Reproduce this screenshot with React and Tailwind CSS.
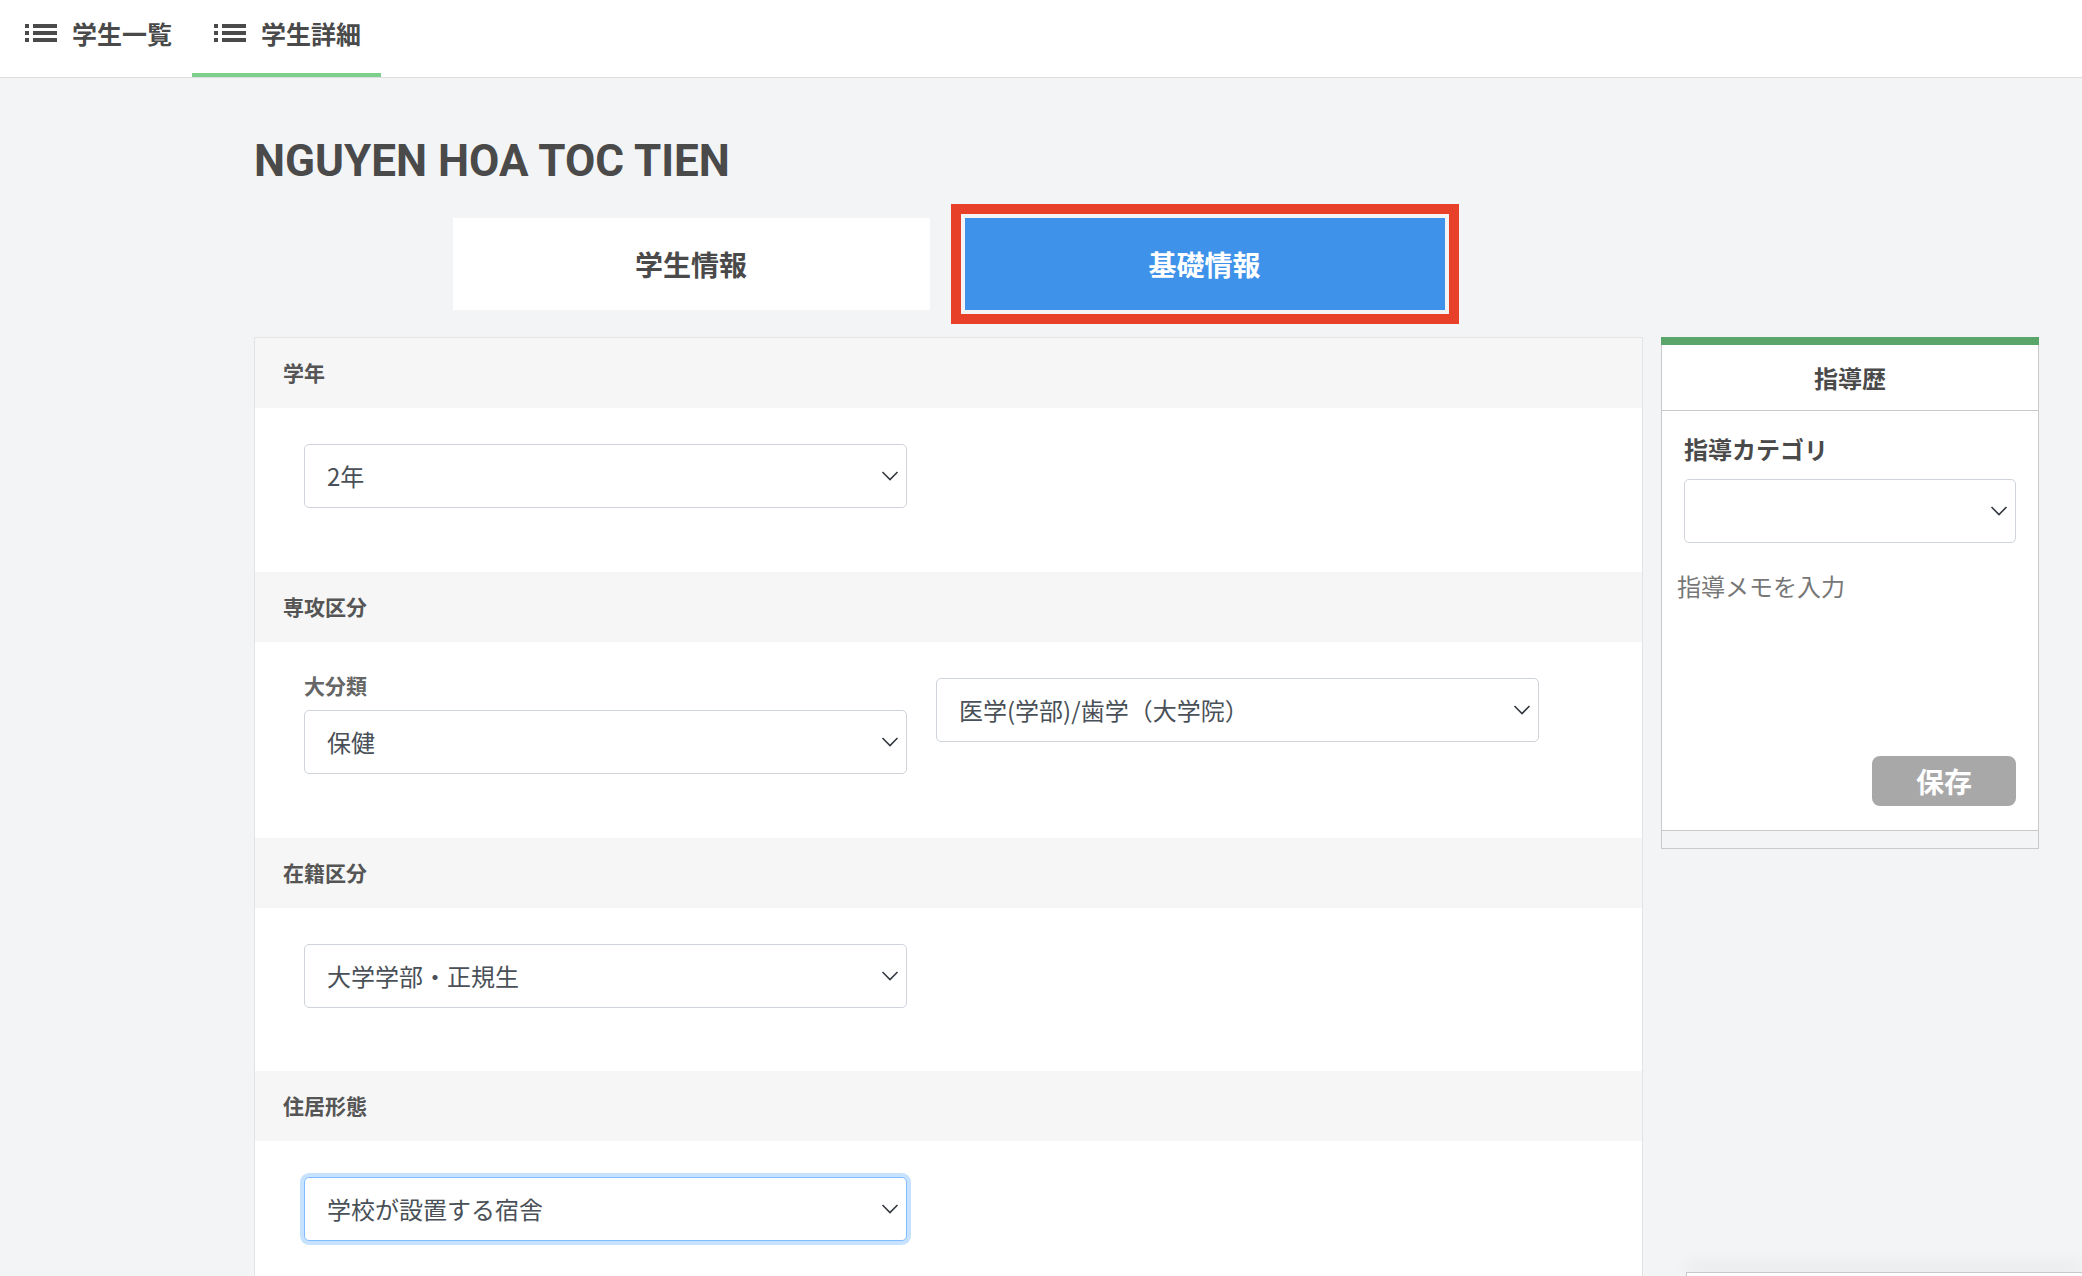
import React from "react";

const JP = { fontFamily: '"Noto Sans CJK JP", "Noto Sans", sans-serif' };

function ListIcon() {
  return (
    <svg width="32" height="18" viewBox="0 0 32 18" fill="#4a4a4a">
      <rect x="0" y="0" width="4" height="4" />
      <rect x="0" y="7" width="4" height="4" />
      <rect x="0" y="14" width="4" height="4" />
      <rect x="8" y="0" width="24" height="4" />
      <rect x="8" y="7" width="24" height="4" />
      <rect x="8" y="14" width="24" height="4" />
    </svg>
  );
}

function Chevron() {
  return (
    <svg
      className="pointer-events-none absolute right-[8px] top-1/2 -translate-y-1/2"
      width="18"
      height="11"
      viewBox="0 0 18 11"
      fill="none"
      stroke="#343a40"
      strokeWidth="1.6"
    >
      <path d="M1.5 1.5 L9 9 L16.5 1.5" />
    </svg>
  );
}

function Select({ value, focus, className = "" }) {
  return (
    <div className={`relative h-[64px] ${className}`}>
      <div
        className={`h-full w-full rounded-[5px] border bg-white pl-[22px] flex items-center text-[24px] text-[#495057] ${
          focus
            ? "border-[#80bdff] shadow-[0_0_0_4px_rgba(0,123,255,0.22)]"
            : "border-[#ced4da]"
        }`}
      >
        {value}
      </div>
      <Chevron />
    </div>
  );
}

function SectionHeader({ children }) {
  return (
    <div className="h-[70px] bg-[#f6f6f6] flex items-center px-[28px] text-[21px] font-bold text-[#555]">
      {children}
    </div>
  );
}

export default function App() {
  return (
    <div className="min-h-screen bg-[#f3f4f6]" style={JP}>
      {/* ─── Top nav ─── */}
      <div className="h-[78px] bg-white border-b border-[#dddddd] flex">
        <div className="relative pl-[25px] pr-[20px] pt-[17px]">
          <div className="flex items-center gap-[15px] h-[32px]">
            <ListIcon />
            <span className="text-[25px] font-bold text-[#4a4a4a] leading-[32px]">学生一覧</span>
          </div>
        </div>
        <div className="relative pl-[22px] pr-[20px] pt-[17px]">
          <div className="flex items-center gap-[15px] h-[32px]">
            <ListIcon />
            <span className="text-[25px] font-bold text-[#4a4a4a] leading-[32px]">学生詳細</span>
          </div>
          <div className="absolute left-0 right-0 bottom-0 h-[4px] bg-[#7dcf8c]" />
        </div>
      </div>

      <div className="pl-[254px]">
        {/* ─── Title & tabs ─── */}
        <div className="w-[1389px]">
          <h1
            className="mt-[61px] text-[44px] leading-[44px] font-bold text-[#4a4a4a]"
            style={{ fontFamily: 'Roboto, "Noto Sans CJK JP", sans-serif' }}
          >
            NGUYEN HOA TOC TIEN
          </h1>
          <div className="mt-[35px] flex justify-center gap-[35px]">
            <div className="w-[477px] h-[92px] bg-white flex items-center justify-center text-[28px] font-bold text-[#4a4a4a]">
              学生情報
            </div>
            <div className="w-[480px] h-[92px] bg-[#3e92ea] flex items-center justify-center text-[28px] font-bold text-white outline-[10px] outline-solid outline-[#e8412a] outline-offset-[4px]">
              基礎情報
            </div>
          </div>
        </div>

        {/* ─── Panels ─── */}
        <div className="mt-[27px] flex gap-[18px] items-start">
          <div className="w-[1389px] border border-[#e3e3e3] bg-white">
            <SectionHeader>学年</SectionHeader>
            <div className="pt-[36px] pb-[64px] pl-[49px]">
              <Select value="2年" className="w-[603px]" />
            </div>

            <SectionHeader>専攻区分</SectionHeader>
            <div className="pt-[36px] pb-[64px] pl-[49px] flex gap-[29px]">
              <div className="w-[603px]">
                <div className="-mt-[7px] mb-[11px] text-[21px] font-bold text-[#666] leading-[28px]">大分類</div>
                <Select value="保健" />
              </div>
              <Select value="医学(学部)/歯学（大学院）" className="w-[603px]" />
            </div>

            <SectionHeader>在籍区分</SectionHeader>
            <div className="pt-[36px] pb-[63px] pl-[49px]">
              <Select value="大学学部・正規生" className="w-[603px]" />
            </div>

            <SectionHeader>住居形態</SectionHeader>
            <div className="pt-[36px] pb-[64px] pl-[49px]">
              <Select value="学校が設置する宿舎" focus className="w-[603px]" />
            </div>
          </div>

          {/* ─── Guidance history ─── */}
          <div className="w-[378px] bg-white border border-[#c9c9c9] border-t-0">
            <div className="h-[8px] bg-[#5aa56a] -mx-px" />
            <div className="h-[66px] border-b border-[#c9c9c9] flex items-center justify-center text-[24px] font-bold text-[#4a4a4a]">
              指導歴
            </div>
            <div className="px-[22px] pt-[22px] pb-[24px]">
              <div className="text-[24px] font-bold text-[#4a4a4a] leading-[32px] mb-[14px]">指導カテゴリ</div>
              <div className="relative h-[64px]">
                <div className="h-full w-full rounded-[5px] border border-[#ced4da] bg-white" />
                <Chevron />
              </div>
              <textarea
                className="mt-[25px] -ml-[7px] block w-[calc(100%+7px)] h-[170px] resize-none p-0 text-[24px] leading-[36px] text-[#495057] placeholder:text-[#777] outline-none bg-transparent"
                placeholder="指導メモを入力"
                style={JP}
              />
              <div className="mt-[18px] flex justify-end">
                <button className="w-[144px] h-[50px] rounded-[8px] bg-[#a8a8a8] text-white text-[28px] font-bold leading-none">
                  保存
                </button>
              </div>
            </div>
            <div className="h-[18px] border-t border-[#c9c9c9] bg-[#f3f4f6]" />
          </div>
        </div>
      </div>

      {/* floating element peeking at bottom right */}
      <div className="fixed left-[1686px] right-0 bottom-0 h-[4px] bg-white border-t border-l border-[#c8c8c8] shadow-[0_-6px_16px_rgba(0,0,0,0.12)]" />
    </div>
  );
}
